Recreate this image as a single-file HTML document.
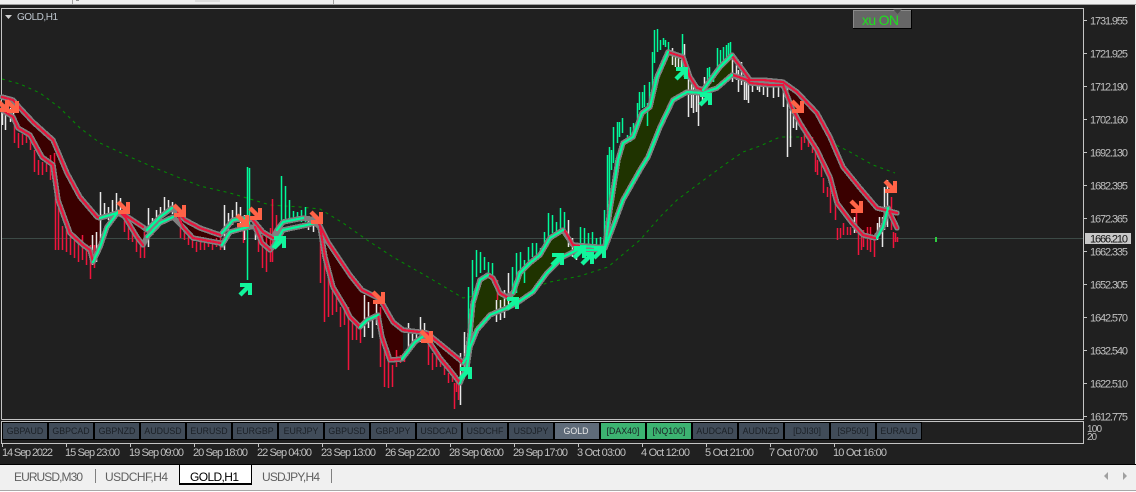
<!DOCTYPE html>
<html><head><meta charset="utf-8"><style>
html,body{margin:0;padding:0;background:#202020;width:1136px;height:492px;overflow:hidden}
svg{display:block}
text{font-family:"Liberation Sans",sans-serif}
.p{font-size:11px;fill:#c0c0c0}
.t{font-size:11px;fill:#c0c0c0}
.b{font-size:8.8px;fill:#1b2026;text-anchor:middle}
.tab{font-size:12px;fill:#606060}
</style></head><body>
<svg width="1136" height="492" viewBox="0 0 1136 492" xmlns="http://www.w3.org/2000/svg">
<defs>
<g id="ad"><path d="M-6-6L2 2" stroke="#ff6347" stroke-width="4.4" fill="none"/><path d="M6-6V6H-6V2H2V-6Z" fill="#ff6347"/></g>
<g id="au"><path d="M-6 6L2-2" stroke="#12f59c" stroke-width="4.4" fill="none"/><path d="M6 6V-6H-6V-2H2V6Z" fill="#12f59c"/></g>
</defs>
<rect width="1136" height="492" fill="#202020"/>
<!-- top strip -->
<rect width="1136" height="4" fill="#f0f0f0"/>
<rect y="4" width="1136" height="1" fill="#a0a0a0"/>
<rect x="72" width="1" height="4" fill="#a0a0a0"/><rect x="333" width="1" height="4" fill="#a0a0a0"/>
<rect x="76" y="0" width="3" height="1" fill="#909090"/><rect x="195" y="0" width="25" height="2" fill="#ddd"/>
<!-- frame -->
<path d="M1.5 419.5V8.5H1083.5V419.5H1.5M1.5 421.5H1083.5V443.5H1.5Z" fill="none" stroke="#c4c4c4" stroke-width="1"/>
<!-- current price line -->
<rect x="2" y="238" width="1081" height="1" fill="#3c4a46"/>
<rect x="935" y="237" width="2" height="5" fill="#2ecc40"/>
<!-- dashed MA -->
<polyline points="2,79 20,84 40,93 60,108 80,128 100,143 130,157 160,170 200,186 230,193 250,199 270,205 300,207 320,209 343,223 367,240 393,257 433,280 463,298 480,295 500,294 517,295 533,288 550,282 580,276 608,267 640,240 660,217 677,200 697,185 727,163 743,152 760,146 780,137 813,137 830,142 850,152 873,165 895,173" fill="none" stroke="#009000" stroke-width="1" stroke-dasharray="3 4"/>
<!-- fills -->
<g fill="#3a0000">
<polygon points="13,100 20,108 33,122 53,140 67,173 80,197 97,217 100,219 100,247 90,250 83,245 70,233 58,200 53,165 42,157 30,135 18,128 13,117"/>
<polygon points="120,210 128,217 143,227 143,245 137,237 125,217"/>
<polygon points="178,212 185,220 200,228 220,235 220,243 193,238 183,227"/>
<polygon points="253,220 263,232 273,238 270,250 262,243 255,227"/>
<polygon points="317,220 328,242 350,275 362,290 380,299 378,317 367,320 360,327 350,317 345,307 333,287 325,257 320,227"/>
<polygon points="380,299 393,322 403,330 403,357 390,360 382,337 378,317"/>
<polygon points="427,333 460,360 463,363 460,383 450,370 440,358 427,343"/>
<polygon points="783,82 790,90 797,92 817,113 830,137 843,167 860,188 877,208 897,213 897,228 890,213 888,208 883,227 877,238 863,235 852,223 837,203 830,177 817,150 800,123 787,93"/>
</g>
<g fill="#1f3300">
<polygon points="467,357 470,333 473,303 480,280 488,275 493,278 500,293 507,297 513,293 520,273 530,263 540,255 550,238 563,230 567,233 575,243 577,250 563,257 547,273 533,292 517,303 507,308 497,312 490,315 477,330 470,347 467,367"/>
<polygon points="605,247 610,210 618,160 623,143 633,137 642,113 650,107 657,77 668,52 683,57 690,77 697,88 687,92 673,100 660,127 648,157 640,170 623,200 613,227 605,248"/>
<polygon points="707,85 720,67 732,55 732,75 717,88 707,92"/>
</g>
<!-- bars -->
<g fill="none" stroke-width="1.5">
<path stroke="#f0143c" d="M14.5 123V143M18.5 133V148M22.5 134V145M26.5 130V143M30.5 135V150M34.5 150V172M38.5 160V175M42.5 162V175M46.5 160V172M50.5 155V180M54.5 153V190M55.5 193V250M58.5 200V250M62.5 226V250M66.5 225V252M70.5 232V255M74.5 240V258M78.5 240V262M82.5 235V260M86.5 248V265M90.5 245V279M94.5 245V268M124.5 218V232M128.5 226V240M132.5 230V242M136.5 237V252M140.5 240V258M144.5 232V258M180.5 218V238M184.5 228V240M188.5 230V245M192.5 235V248M196.5 242V252M200.5 238V250M204.5 238V250M208.5 238V247M212.5 240V250M216.5 238V247M220.5 235V250M243.5 230V243M258.5 228V252M262.5 235V268M266.5 232V272M270.5 228V262M272.5 199V262M276.5 215V245M320.5 220V283M324.5 240V322M328.5 267V317M332.5 288V315M336.5 297V312M340.5 307V327M344.5 307V325M348.5 307V370M352.5 320V340M356.5 320V340M360.5 327V343M380.5 307V367M384.5 343V387M388.5 357V388M392.5 365V387M396.5 350V367M400.5 355V363M404.5 355V362M428.5 343V365M432.5 353V370M436.5 355V367M440.5 357V367M444.5 365V375M448.5 373V383M452.5 372V382M454.5 383V409M456.5 377V392M458.5 383V400M497.5 280V300M801.5 137V150M804.5 132V143M808.5 135V147M812.5 137V153M815.5 150V172M817.5 160V175M821.5 162V177M823.5 178V193M827.5 187V197M830.5 188V213M835.5 197V220M837.5 228V240M840.5 228V238M843.5 223V235M847.5 227V235M850.5 227V235M856.5 213V233M858.5 230V255M861.5 237V250M863.5 230V247M867.5 227V250M870.5 227V252M874.5 237V257M891.5 197V230M893.5 232V248M895.5 233V242M897.5 237V242"/>
<path stroke="#e8e8e8" d="M2.5 105V125M5.5 104V130M10.5 108V122M13.5 105V118M92.5 235V265M96.5 232V262M100.5 192V250M104.5 203V218M108.5 207V220M112.5 200V216M116.5 193V214M120.5 198V212M148.5 208V247M152.5 218V235M156.5 210V225M160.5 207V220M164.5 197V213M168.5 200V213M172.5 202V214M176.5 205V215M224.5 205V250M228.5 213V230M232.5 210V225M236.5 202V218M240.5 207V228M244.5 215V240M255.5 220V240M308.5 220V230M313.5 213V232M364.5 295V337M368.5 302V328M372.5 317V338M376.5 300V325M408.5 323V350M412.5 333V342M416.5 330V340M420.5 317V342M424.5 323V338M460.5 353V405M464.5 332V367M496.5 300V322M500.5 300V320M504.5 290V318M508.5 273V307M568.5 220V247M572.5 238V257M576.5 243V260M672.5 48V65M675.5 57V67M678.5 57V67M681.5 60V68M684.5 44V77M688.5 78V117M691.5 77V108M693.5 80V113M696.5 90V112M698.5 90V126M702.5 90V100M704.5 77V92M732.5 55V82M736.5 63V80M738.5 70V92M741.5 62V85M744.5 73V100M746.5 77V100M748.5 77V103M752.5 83V92M757.5 82V90M759.5 83V92M763.5 85V95M767.5 87V97M773.5 85V98M778.5 83V97M783.5 80V107M787.5 83V157M790.5 110V147M793.5 112V128M796.5 112V130M854.5 217V233M877.5 223V240M879.5 217V233M882.5 217V247M884.5 187V230M887.5 180V227"/>
<path stroke="#00fa9a" d="M247.5 167V280M249.5 168V230M281.5 176V225M285.5 186V222M289.5 200V222M293.5 211V222M297.5 212V222M301.5 210V222M305.5 207V222M468.5 287V357M472.5 260V300M476.5 250V277M480.5 252V273M484.5 257V270M488.5 262V273M492.5 263V275M512.5 267V297M516.5 253V293M520.5 252V277M524.5 260V283M528.5 247V263M532.5 243V257M536.5 243V257M540.5 248V255M544.5 232V248M548.5 213V238M552.5 215V233M556.5 222V235M560.5 208V230M564.5 212V230M580.5 227V250M584.5 228V247M588.5 233V250M592.5 232V250M596.5 238V250M600.5 237V250M604.5 210V247M607.5 155V230M609.5 147V220M611.5 150V170M613.5 127V163M617.5 122V143M619.5 122V137M622.5 118V133M627.5 135V143M630.5 127V142M633.5 123V135M637.5 103V127M639.5 92V110M642.5 92V108M644.5 85V107M647.5 103V126M649.5 82V107M652.5 52V102M654.5 30V63M657.5 29V52M660.5 40V50M663.5 38V45M665.5 40V47M668.5 42V52M682.5 34V70M707.5 68V83M709.5 67V77M713.5 72V82M717.5 48V70M720.5 50V65M723.5 47V62M726.5 45V58M728.5 43V57M730.5 42V55"/>
</g>
<!-- gray halo -->
<g fill="none" stroke="#808080" stroke-width="5.4" stroke-linejoin="round" stroke-linecap="round" shape-rendering="crispEdges">
<polyline points="2,97 13,100 20,108 33,122 53,140 67,173 80,197 97,217 100,218 117,213 128,217 143,227 147,230 160,217 172,208 185,220 200,228 220,235 222,233 233,220 248,218 253,220 263,232 273,238 277,230 283,222 303,218 317,220 328,242 350,275 362,290 380,299 393,322 403,330 427,333 460,360 463,363"/>
<polyline points="2,110 13,117 18,128 30,135 42,157 53,165 58,200 70,233 83,245 90,250 93,262 100,247 107,227 118,212 125,217 137,237 143,245 147,237 160,223 173,217 183,227 193,238 220,243 222,245 230,232 248,227 255,227 262,243 270,250 273,247 283,230 307,225 315,223 320,227 325,257 333,287 345,307 350,317 360,327 367,320 378,315 382,337 390,360 402,359 415,342 425,335 440,358 450,370 460,383"/>
<polyline points="460,383 467,367 470,347 477,330 490,315 497,312 507,308 517,303 533,292 547,273 563,257 577,250 597,250 605,248 613,227 623,200 640,170 648,157 660,127 673,100 687,92 703,93 717,88 732,75 747,80 750,83 770,85 783,85 792,108 800,123 817,150 830,177 837,203 852,223 863,235 875,238 883,227 888,208 890,213 897,228"/>
<polyline points="463,363 467,357 470,333 473,303 480,280 488,275 493,278 500,293 507,297 513,293 520,273 530,263 540,255 550,238 563,230 573,245 597,247 605,247 610,210 618,160 623,143 633,137 642,113 650,107 657,77 668,52 683,57 690,77 697,88 703,90 720,67 732,55 743,70 750,80 763,80 783,82 797,92 817,113 830,137 843,167 860,188 877,208 897,213"/>
</g>
<!-- coloured bands -->
<g fill="none" stroke="#e8143c" stroke-width="2.2" stroke-linejoin="round" stroke-linecap="round" shape-rendering="crispEdges">
<polyline points="2,97 13,100 20,108 33,122 53,140 67,173 80,197 97,217 100,218"/>
<polyline points="2,110 13,117 18,128 30,135 42,157 53,165 58,200 70,233 83,245 90,250 93,262"/>
<polyline points="120,211 128,217 143,227"/><polyline points="120,212 125,217 137,237 143,245"/>
<polyline points="178,212 185,220 200,228 220,235"/><polyline points="178,215 183,227 193,238 220,243"/>
<polyline points="253,220 263,232 273,238"/><polyline points="255,227 262,243 270,250"/>
<polyline points="317,220 328,242 350,275 362,290 380,299 393,322 403,330 427,333 460,360 463,363"/>
<polyline points="320,227 325,257 333,287 345,307 350,317 360,327"/>
<polyline points="378,315 382,337 390,360 402,359"/><polyline points="427,338 440,358 450,370 460,383"/>
<polyline points="490,276 493,278 500,293 507,297"/><polyline points="565,231 573,245 580,246"/>
<polyline points="668,52 683,57 690,77 697,88 703,90"/>
<polyline points="732,56 743,70 750,80 763,80 783,82 797,92 817,113 830,137 843,167 860,188 877,208 897,213"/>
<polyline points="733,75 747,80 750,83 770,85 783,85 792,108 800,123 817,150 830,177 837,203 852,223 863,235 875,238"/>
<polyline points="890,213 897,228"/>
</g>
<g fill="none" stroke="#00fa9a" stroke-width="2.2" stroke-linejoin="round" stroke-linecap="round" shape-rendering="crispEdges">
<polyline points="100,218 117,213"/><polyline points="93,262 100,247 107,227 118,212"/>
<polyline points="147,230 160,217 172,208"/><polyline points="147,237 160,223 173,217"/>
<polyline points="222,233 233,220 248,218"/><polyline points="222,245 230,232 248,227"/>
<polyline points="277,230 283,222 303,218"/><polyline points="273,247 283,230 307,225 315,223"/>
<polyline points="360,327 367,320 378,315"/><polyline points="402,359 415,342 425,335"/>
<polyline points="460,383 467,367 470,347 477,330 490,315 497,312 507,308 517,303 533,292 547,273 563,257 577,250 597,250 605,248 613,227 623,200 640,170 648,157 660,127 673,100 687,92 703,93 717,88 732,75"/>
<polyline points="463,363 467,357 470,333 473,303 480,280 488,275"/>
<polyline points="513,293 520,273 530,263 540,255 550,238 563,230"/>
<polyline points="581,246 597,247 605,247 610,210 618,160 623,143 633,137 642,113 650,107 657,77 668,52"/>
<polyline points="703,90 720,67 732,55"/>
<polyline points="877,238 883,227 888,208"/>
</g>
<!-- arrows -->
<use href="#ad" x="3" y="106"/><use href="#ad" x="13" y="107"/><use href="#ad" x="124" y="208"/><use href="#ad" x="180" y="211"/><use href="#ad" x="243" y="221"/><use href="#ad" x="256" y="214"/><use href="#ad" x="317" y="218"/><use href="#ad" x="379" y="298"/><use href="#ad" x="427" y="337"/><use href="#ad" x="798" y="107"/><use href="#ad" x="857" y="207"/><use href="#ad" x="891" y="187"/>
<use href="#au" x="246" y="289"/><use href="#au" x="280" y="242"/><use href="#au" x="466" y="373"/><use href="#au" x="513" y="303"/><use href="#au" x="558" y="259"/><use href="#au" x="580" y="252"/><use href="#au" x="588" y="258"/><use href="#au" x="600" y="252"/><use href="#au" x="682" y="73"/><use href="#au" x="706" y="99"/>
<!-- title -->
<path d="M5 15H12L8.5 19Z" fill="#d0d0d0"/>
<text x="17" y="20" style="font-size:10px;fill:#c0c8d0" textLength="41">GOLD,H1</text>
<!-- xu ON -->
<rect x="853" y="10" width="59" height="19" fill="#000"/>
<rect x="853" y="10" width="58" height="18" fill="#666"/>
<rect x="853" y="10" width="58" height="1" fill="#8a8a8a"/><rect x="853" y="10" width="1" height="18" fill="#8a8a8a"/>
<path d="M893 9H902L897.5 14Z" fill="#4c4c4c"/>
<text x="862" y="25" style="font-size:14px;fill:#1ee01e" textLength="37">xu ON</text>
<!-- price axis -->
<g fill="#c4c4c4"><rect x="1084" y="20" width="3" height="1"/><rect x="1084" y="53" width="3" height="1"/><rect x="1084" y="86" width="3" height="1"/><rect x="1084" y="119" width="3" height="1"/><rect x="1084" y="152" width="3" height="1"/><rect x="1084" y="185" width="3" height="1"/><rect x="1084" y="218" width="3" height="1"/><rect x="1084" y="251" width="3" height="1"/><rect x="1084" y="284" width="3" height="1"/><rect x="1084" y="317" width="3" height="1"/><rect x="1084" y="350" width="3" height="1"/><rect x="1084" y="383" width="3" height="1"/><rect x="1084" y="416" width="3" height="1"/></g>
<g class="p">
<text class="p" x="1090" y="24.5" textLength="38">1731.955</text>
<text class="p" x="1090" y="57.5" textLength="38">1721.925</text>
<text class="p" x="1090" y="90.5" textLength="38">1712.190</text>
<text class="p" x="1090" y="123.5" textLength="38">1702.160</text>
<text class="p" x="1090" y="156.5" textLength="38">1692.130</text>
<text class="p" x="1090" y="189.5" textLength="38">1682.395</text>
<text class="p" x="1090" y="222.5" textLength="38">1672.365</text>
<text class="p" x="1090" y="255.5" textLength="38">1662.335</text>
<text class="p" x="1090" y="288.5" textLength="38">1652.305</text>
<text class="p" x="1090" y="321.5" textLength="38">1642.570</text>
<text class="p" x="1090" y="354.5" textLength="38">1632.540</text>
<text class="p" x="1090" y="387.5" textLength="38">1622.510</text>
<text class="p" x="1090" y="420.5" textLength="38">1612.775</text>
</g>
<rect x="1085" y="233" width="46" height="11" fill="#c8c8c8"/>
<text x="1090" y="242.5" style="font-size:11px;fill:#111" textLength="38">1666.210</text>
<text class="p" x="1087" y="432" textLength="15" style="font-size:10px">100</text>
<text class="p" x="1087" y="440" textLength="10" style="font-size:10px">20</text>
<!-- buttons -->
<g fill="#000">
<rect x="2" y="422" width="46" height="18"/><rect x="48" y="422" width="46" height="18"/><rect x="94" y="422" width="46" height="18"/><rect x="140" y="422" width="46" height="18"/><rect x="186" y="422" width="46" height="18"/><rect x="232" y="422" width="46" height="18"/><rect x="278" y="422" width="46" height="18"/><rect x="324" y="422" width="46" height="18"/><rect x="370" y="422" width="46" height="18"/><rect x="416" y="422" width="46" height="18"/><rect x="462" y="422" width="46" height="18"/><rect x="508" y="422" width="46" height="18"/><rect x="554" y="422" width="46" height="18"/><rect x="600" y="422" width="46" height="18"/><rect x="646" y="422" width="46" height="18"/><rect x="692" y="422" width="46" height="18"/><rect x="738" y="422" width="46" height="18"/><rect x="784" y="422" width="46" height="18"/><rect x="830" y="422" width="46" height="18"/><rect x="876" y="422" width="46" height="18"/>
</g>
<g fill="#414c59">
<rect x="3" y="423" width="44" height="16"/><rect x="49" y="423" width="44" height="16"/><rect x="95" y="423" width="44" height="16"/><rect x="141" y="423" width="44" height="16"/><rect x="187" y="423" width="44" height="16"/><rect x="233" y="423" width="44" height="16"/><rect x="279" y="423" width="44" height="16"/><rect x="325" y="423" width="44" height="16"/><rect x="371" y="423" width="44" height="16"/><rect x="417" y="423" width="44" height="16"/><rect x="463" y="423" width="44" height="16"/><rect x="509" y="423" width="44" height="16"/><rect x="693" y="423" width="44" height="16"/><rect x="739" y="423" width="44" height="16"/><rect x="785" y="423" width="44" height="16"/><rect x="831" y="423" width="44" height="16"/><rect x="877" y="423" width="44" height="16"/>
</g>
<rect x="555" y="423" width="44" height="16" fill="#5f6b79"/>
<rect x="601" y="423" width="44" height="16" fill="#3cb371"/><rect x="647" y="423" width="44" height="16" fill="#3cb371"/>
<text class="b" x="25" y="434">GBPAUD</text><text class="b" x="71" y="434">GBPCAD</text><text class="b" x="117" y="434">GBPNZD</text><text class="b" x="163" y="434">AUDUSD</text><text class="b" x="209" y="434">EURUSD</text><text class="b" x="255" y="434">EURGBP</text><text class="b" x="301" y="434">EURJPY</text><text class="b" x="347" y="434">GBPUSD</text><text class="b" x="393" y="434">GBPJPY</text><text class="b" x="439" y="434">USDCAD</text><text class="b" x="485" y="434">USDCHF</text><text class="b" x="531" y="434">USDJPY</text>
<text class="b" x="576" y="434" style="fill:#e8e8e8">GOLD</text>
<text class="b" x="623" y="434">[DAX40]</text><text class="b" x="669" y="434">[NQ100]</text><text class="b" x="715" y="434">AUDCAD</text><text class="b" x="761" y="434">AUDNZD</text><text class="b" x="807" y="434">[DJI30]</text><text class="b" x="853" y="434">[SP500]</text><text class="b" x="899" y="434">EURAUD</text>
<!-- time axis -->
<g fill="#c4c4c4"><rect x="2" y="444" width="1" height="3"/><rect x="66" y="444" width="1" height="3"/><rect x="130" y="444" width="1" height="3"/><rect x="194" y="444" width="1" height="3"/><rect x="258" y="444" width="1" height="3"/><rect x="322" y="444" width="1" height="3"/><rect x="386" y="444" width="1" height="3"/><rect x="450" y="444" width="1" height="3"/><rect x="514" y="444" width="1" height="3"/><rect x="578" y="444" width="1" height="3"/><rect x="642" y="444" width="1" height="3"/><rect x="706" y="444" width="1" height="3"/><rect x="770" y="444" width="1" height="3"/><rect x="834" y="444" width="1" height="3"/></g>
<text class="t" x="2" y="456" textLength="51">14 Sep 2022</text>
<text class="t" x="65" y="456" textLength="55">15 Sep 23:00</text>
<text class="t" x="129" y="456" textLength="55">19 Sep 09:00</text>
<text class="t" x="193" y="456" textLength="55">20 Sep 18:00</text>
<text class="t" x="257" y="456" textLength="55">22 Sep 04:00</text>
<text class="t" x="321" y="456" textLength="55">23 Sep 13:00</text>
<text class="t" x="385" y="456" textLength="55">26 Sep 22:00</text>
<text class="t" x="449" y="456" textLength="55">28 Sep 08:00</text>
<text class="t" x="513" y="456" textLength="55">29 Sep 17:00</text>
<text class="t" x="577" y="456" textLength="49">3 Oct 03:00</text>
<text class="t" x="641" y="456" textLength="49">4 Oct 12:00</text>
<text class="t" x="705" y="456" textLength="49">5 Oct 21:00</text>
<text class="t" x="769" y="456" textLength="49">7 Oct 07:00</text>
<text class="t" x="833" y="456" textLength="54">10 Oct 16:00</text>
<!-- tab bar -->
<rect y="464" width="1136" height="28" fill="#f0f0f0"/>
<rect y="464" width="1136" height="1" fill="#000"/>
<rect y="490" width="1136" height="1" fill="#a8a8a8"/><rect y="491" width="1136" height="1" fill="#fff"/>
<rect x="179" y="465" width="73" height="20" fill="#000"/><rect x="180" y="465" width="71" height="18" fill="#fff"/>
<rect x="95" y="469" width="1" height="14" fill="#808080"/><rect x="331" y="469" width="1" height="14" fill="#808080"/>
<text class="tab" x="14" y="481" textLength="69">EURUSD,M30</text>
<text class="tab" x="105" y="481" textLength="63">USDCHF,H4</text>
<text x="190" y="481" style="font-size:12px;fill:#000" textLength="49">GOLD,H1</text>
<text class="tab" x="262" y="481" textLength="58">USDJPY,H4</text>
<path d="M1108 472V480L1104 476Z" fill="#a0a0a0"/><path d="M1123 472V480L1127 476Z" fill="#a0a0a0"/>
<rect x="1135" y="5" width="1" height="459" fill="#e8e8e8"/>
</svg>
</body></html>
